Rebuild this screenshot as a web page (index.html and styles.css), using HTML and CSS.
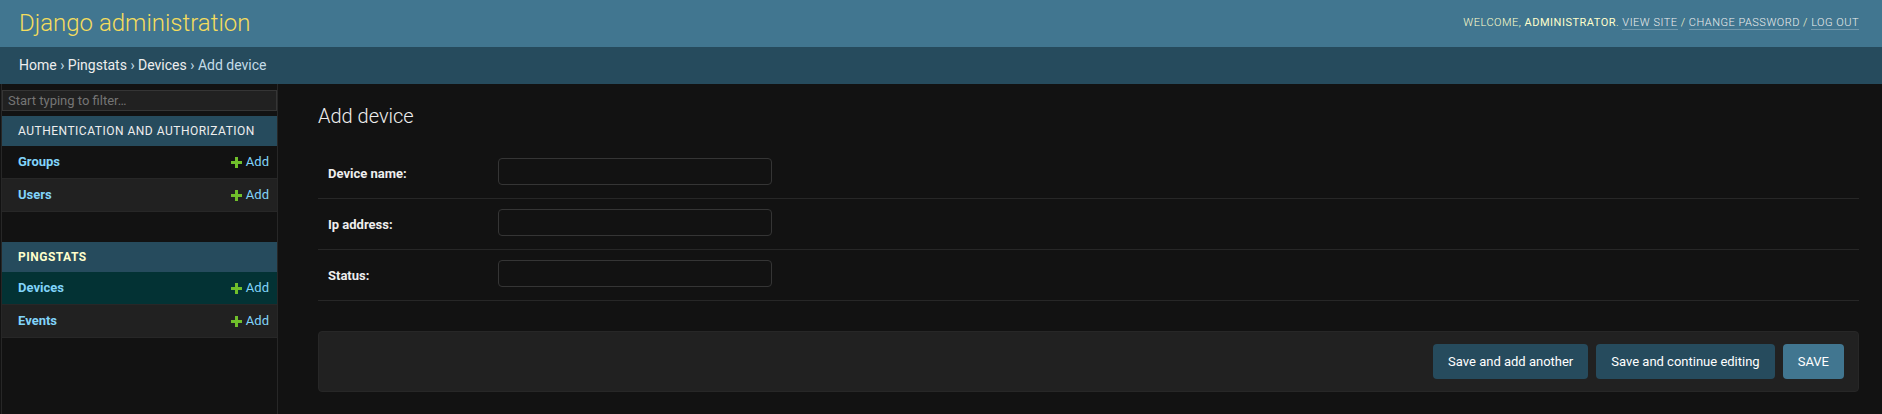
FILE: index.html
```html
<!DOCTYPE html>
<html lang="en">
<head>
<meta charset="utf-8">
<title>Add device | Django site admin</title>
<link rel="stylesheet" href="styles.css">
</head>
<body>
<header class="header">
  <a class="site-name" href="#">Django administration</a>
  <div class="user-tools">Welcome, <strong>Administrator</strong>. <a href="#">View site</a> / <a href="#">Change password</a> / <a href="#">Log out</a></div>
</header>
<nav class="breadcrumbs" aria-label="Breadcrumbs"><a href="#">Home</a> › <a href="#">Pingstats</a> › <a href="#">Devices</a> › Add device</nav>
<div class="main">
  <nav class="sidebar" aria-label="Applications">
    <input class="filter" type="search" placeholder="Start typing to filter…" aria-label="Filter navigation items">
    <table class="module">
      <caption><a href="#">Authentication and Authorization</a></caption>
      <tbody>
        <tr><th scope="row"><a href="#">Groups</a></th><td><a class="add" href="#"><svg viewBox="0 0 11 11" aria-hidden="true"><path d="M4 0h3v4h4v3H7v4H4V7H0V4h4z"/></svg>Add</a></td></tr>
        <tr><th scope="row"><a href="#">Users</a></th><td><a class="add" href="#"><svg viewBox="0 0 11 11" aria-hidden="true"><path d="M4 0h3v4h4v3H7v4H4V7H0V4h4z"/></svg>Add</a></td></tr>
      </tbody>
    </table>
    <table class="module current-app">
      <caption><a href="#">Pingstats</a></caption>
      <tbody>
        <tr class="current-model"><th scope="row"><a href="#">Devices</a></th><td><a class="add" href="#"><svg viewBox="0 0 11 11" aria-hidden="true"><path d="M4 0h3v4h4v3H7v4H4V7H0V4h4z"/></svg>Add</a></td></tr>
        <tr><th scope="row"><a href="#">Events</a></th><td><a class="add" href="#"><svg viewBox="0 0 11 11" aria-hidden="true"><path d="M4 0h3v4h4v3H7v4H4V7H0V4h4z"/></svg>Add</a></td></tr>
      </tbody>
    </table>
  </nav>
  <main class="content">
    <h1>Add device</h1>
    <form>
      <div class="form-row"><label for="name">Device name:</label><input id="name" type="text"></div>
      <div class="form-row"><label for="ip">Ip address:</label><input id="ip" type="text"></div>
      <div class="form-row"><label for="status">Status:</label><input id="status" type="text"></div>
      <div class="submit-row">
        <button type="button">Save and add another</button>
        <button type="button">Save and continue editing</button>
        <button class="default" type="button">SAVE</button>
      </div>
    </form>
  </main>
</div>
</body>
</html>
```
FILE: styles.css
```css
* {
  box-sizing: border-box;
}

body {
  display: flex;
  flex-direction: column;
  min-height: 100vh;
  margin: 0;
  background: #121212;
  color: #eee;
  font-family: Roboto, "Liberation Sans", sans-serif;
  font-size: 13px;
}

a {
  color: #81d4fa;
  text-decoration: none;
}

.header {
  display: flex;
  align-items: center;
  justify-content: space-between;
  padding: 9px 23px 10px 19px;
  background: #417690;
  color: #ffc;
}

.site-name {
  color: #f5dd5d;
  font-size: 24px;
  font-weight: 300;
  line-height: 28px;
}

.user-tools {
  font-size: 11px;
  font-weight: 300;
  letter-spacing: 0.5px;
  line-height: 14px;
  text-transform: uppercase;
}

.user-tools a {
  border-bottom: 1px solid rgba(255, 255, 255, 0.25);
  color: #eee;
}

.breadcrumbs {
  padding: 10px 19px;
  background: #264b5d;
  color: #c4dce8;
  font-size: 14px;
  line-height: 17px;
}

.breadcrumbs a {
  color: #eee;
}

.main {
  display: flex;
  flex: 1;
}

.sidebar {
  flex: 0 0 277px;
  margin-left: 1px;
  padding-top: 6px;
  border: 1px solid #272727;
  border-width: 0 1px;
}

.filter {
  display: block;
  width: 100%;
  height: 21px;
  margin: 0 0 5px;
  padding: 2px 5px;
  border: 1px solid #353535;
  border-radius: 0;
  appearance: none;
  outline: 0;
  background: #212121;
  color: #eee;
  font: 13px Roboto, sans-serif;
}

.filter::placeholder {
  color: #757575;
}

.module {
  width: 100%;
  margin-bottom: 30px;
  border-collapse: separate;
  border-spacing: 0;
}

.module caption {
  height: 30px;
  padding: 0 16px;
  background: #264b5d;
  font-size: 12px;
  letter-spacing: 0.5px;
  line-height: 30px;
  text-align: left;
  text-transform: uppercase;
}

.module caption a {
  color: #eee;
}

.current-app caption a {
  color: #ffc;
  font-weight: 700;
}

.module th,
.module td {
  height: 33px;
  padding: 0 8px 0 16px;
  border-bottom: 1px solid #272727;
  line-height: 16px;
  text-align: left;
}

.module tr:nth-child(even) {
  background: #212121;
}

.module .current-model {
  background: #033234;
}

.add {
  display: flex;
  align-items: center;
  justify-content: flex-end;
  gap: 4px;
}

.add svg {
  width: 11px;
  height: 11px;
  fill: #70bf2b;
}

.content {
  flex: 1;
  padding: 20px 23px 20px 40px;
}

h1 {
  margin: 0 0 20px;
  font-size: 20px;
  font-weight: 300;
  line-height: 24px;
}

.form-row {
  display: flex;
  align-items: flex-start;
  padding: 10px;
  border-bottom: 1px solid #272727;
}

.form-row label {
  flex: 0 0 170px;
  padding-top: 8px;
  font-weight: 700;
  line-height: 16px;
}

.form-row input {
  width: 274px;
  height: 27px;
  margin: 0 0 3px;
  padding: 5px 6px;
  border: 1px solid #353535;
  border-radius: 4px;
  background: #121212;
  color: #eee;
  font: 13px Roboto, sans-serif;
}

.submit-row {
  display: flex;
  flex-wrap: wrap;
  justify-content: flex-end;
  gap: 8px;
  margin-top: 30px;
  padding: 12px 14px;
  border: 1px solid #272727;
  border-radius: 4px;
  background: #212121;
}

button {
  height: 35px;
  padding: 0 15px;
  border: 0;
  border-radius: 4px;
  background: #264b5d;
  color: #fff;
  font: 13px Roboto, sans-serif;
}

button.default {
  background: #417690;
}
```
